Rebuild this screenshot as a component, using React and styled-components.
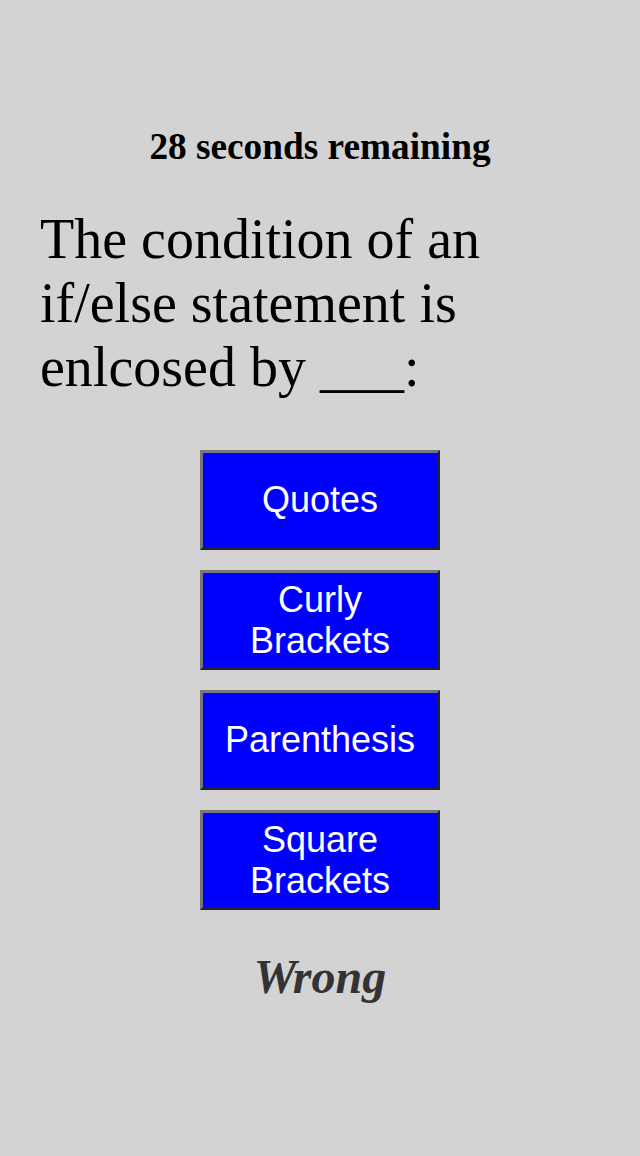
import React from "react";
import styled, { createGlobalStyle } from "styled-components";

const GlobalStyle = createGlobalStyle`
  html, body {
    margin: 0;
    padding: 0;
    background: #d3d3d3;
  }
  body {
    font-family: "Liberation Serif", "Times New Roman", serif;
  }
`;

const Page = styled.main`
  min-height: 1156px;
  padding: 125px 40px 0;
  box-sizing: border-box;
  display: flex;
  flex-direction: column;
`;

const Timer = styled.h2`
  margin: 0;
  text-align: center;
  font-size: 37.3px;
  font-weight: bold;
  color: #000;
`;

const Question = styled.p`
  margin: 39px 0 0;
  font-size: 56px;
  color: #000;
`;

const Choices = styled.div`
  margin-top: 51px;
  display: flex;
  flex-direction: column;
  align-items: center;
  gap: 20px;
`;

const Choice = styled.button`
  width: 240px;
  height: 100px;
  box-sizing: border-box;
  padding: 0 4px;
  background: #0000ff;
  color: #fff;
  font-family: "Liberation Sans", Arial, sans-serif;
  font-size: 36px;
  line-height: 1.15;
  border: 3px solid;
  border-color: #777 #222 #222 #777;
  cursor: pointer;
`;

const Result = styled.p`
  margin: 39px 0 0;
  text-align: center;
  font-size: 48px;
  font-weight: bold;
  font-style: italic;
  color: #333;
`;

const choices = ["Quotes", "Curly Brackets", "Parenthesis", "Square Brackets"];

export default function App() {
  return (
    <>
      <GlobalStyle />
      <Page>
        <Timer>28 seconds remaining</Timer>
        <Question>The condition of an if/else statement is enlcosed by ___:</Question>
        <Choices>
          {choices.map((c) => (
            <Choice key={c}>{c}</Choice>
          ))}
        </Choices>
        <Result>Wrong</Result>
      </Page>
    </>
  );
}
